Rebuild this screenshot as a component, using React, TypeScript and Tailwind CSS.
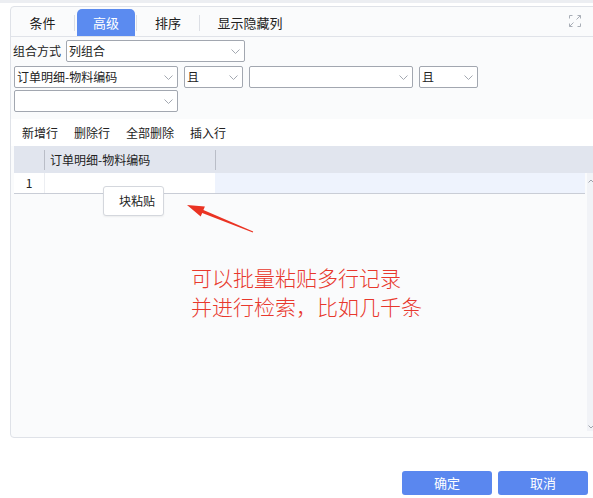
import React from "react";

function Chevron() {
  return (
    <svg width="9" height="5" viewBox="0 0 9 5" className="shrink-0">
      <polyline points="0.5,0.5 4.5,4.5 8.5,0.5" fill="none" stroke="#a3a8b1" strokeWidth="1" />
    </svg>
  );
}

function Select({ w, value }: { w: number; value?: string }) {
  return (
    <div
      className="h-[22px] border border-[#a2a7b0] rounded-[2px] bg-white flex items-center justify-between pl-[2px] pr-[4px] text-[12px] text-[#222] leading-none"
      style={{ width: w }}
    >
      <span>{value ?? ""}</span>
      <Chevron />
    </div>
  );
}

function ExpandIcon() {
  return (
    <svg width="12" height="12" viewBox="0 0 12 12" className="block">
      <g fill="none" stroke="#a9aeb7" strokeWidth="1">
        <polyline points="0.5,3.5 0.5,0.5 3.5,0.5" />
        <polyline points="11.5,8.5 11.5,11.5 8.5,11.5" />
        <line x1="7.5" y1="4.5" x2="11.5" y2="0.5" />
        <polyline points="8.5,0.5 11.5,0.5 11.5,3.5" />
        <line x1="0.5" y1="11.5" x2="4.5" y2="7.5" />
        <polyline points="0.5,8.5 0.5,11.5 3.5,11.5" />
      </g>
    </svg>
  );
}

export default function App() {
  return (
    <div className="relative w-[593px] h-[498px] overflow-hidden bg-white font-['Noto_Sans_CJK_SC',sans-serif] text-[#222]">
      <div className="h-[3px] bg-[#eceef2]" />
      <div className="mt-[3px] ml-[10px] w-[600px] h-[432px] border border-[#dfe2e8] rounded-[4px] bg-[#fafbfc] flex flex-col">
        {/* tabs */}
        <div className="h-[30px] pt-[2px] border-b border-[#e0e3e9] flex items-stretch relative">
          <div className="w-[63px] flex items-center justify-center text-[13px] text-[#222]">条件</div>
          <div className="w-px h-[16px] bg-[#dcdfe5] self-center" />
          <div className="ml-[2px] w-[58px] flex items-center justify-center text-[13px] text-white bg-[#5b8bf0] rounded-t-[5px]">高级</div>
          <div className="ml-[1px] w-px h-[16px] bg-[#dcdfe5] self-center" />
          <div className="w-[62px] flex items-center justify-center text-[13px]">排序</div>
          <div className="w-px h-[16px] bg-[#dcdfe5] self-center" />
          <div className="w-[100px] flex items-center justify-center text-[13px]">显示隐藏列</div>
          <div className="absolute left-[558px] top-[8px]">
            <ExpandIcon />
          </div>
        </div>

        {/* form */}
        <div className="mt-[3px] flex items-center h-[22px]">
          <span className="pl-[2px] w-[55px] text-[12px]">组合方式</span>
          <Select w={179} value="列组合" />
        </div>
        <div className="mt-[4px] flex items-center h-[22px] pl-[3px] gap-[6px]">
          <Select w={164} value="订单明细-物料编码" />
          <Select w={59} value="且" />
          <Select w={164} />
          <Select w={59} value="且" />
        </div>
        <div className="mt-[2px] flex items-center h-[22px] pl-[3px]">
          <Select w={164} />
        </div>

        {/* toolbar */}
        <div className="mt-[7px] h-[27px] bg-white flex items-center pl-[11px] gap-[16px] text-[12px]">
          <span>新增行</span>
          <span>删除行</span>
          <span>全部删除</span>
          <span>插入行</span>
        </div>

        {/* table */}
        <div className="ml-[3px] flex flex-col">
          <div className="h-[27px] bg-[#e1e5ee] flex items-center text-[12px]">
            <div className="w-[30px]" />
            <div className="w-px h-[20px] bg-[#b9bdc7]" />
            <div className="w-[170px] pl-[5px]">订单明细-物料编码</div>
            <div className="w-px h-[20px] bg-[#b9bdc7]" />
          </div>
          <div className="flex">
            <div className="w-[571px] h-[21px] flex border-b border-[#c9cdd6] text-[12px]">
              <div className="w-[30px] bg-white flex items-center justify-center">1</div>
              <div className="w-px bg-[#eceef2]" />
              <div className="w-[170px] bg-white" />
              <div className="flex-1 bg-[#eef3fd]" />
            </div>
            <div className="ml-[2px] w-[14px] h-[258px] bg-[#f1f3f7] relative">
              <svg width="6" height="4" viewBox="0 0 6 4" className="absolute left-[1px] top-[6px]">
                <polyline points="0.5,3.5 3,1 5.5,3.5" fill="none" stroke="#a0a4ad" strokeWidth="1" />
              </svg>
              <svg width="6" height="4" viewBox="0 0 6 4" className="absolute left-[1px] bottom-[2px]">
                <polyline points="0.5,0.5 3,3 5.5,0.5" fill="none" stroke="#a0a4ad" strokeWidth="1" />
              </svg>
            </div>
          </div>
        </div>
      </div>

      {/* buttons */}
      <div className="mt-[33px] flex justify-end gap-[6px] pr-[5px]">
        <button className="w-[90px] h-[24px] rounded-[3px] bg-[#5a87ef] text-white text-[13px] flex items-center justify-center">确定</button>
        <button className="w-[90px] h-[24px] rounded-[3px] bg-[#5a87ef] text-white text-[13px] flex items-center justify-center">取消</button>
      </div>

      {/* context menu */}
      <div className="absolute left-[103px] top-[186px] w-[61px] h-[30px] bg-white border border-[#d4d7dd] rounded-[3px] flex items-center pl-[15px] text-[12px] shadow-[0_1px_2px_rgba(0,0,0,0.06)]">
        块粘贴
      </div>

      {/* annotation arrow */}
      <svg width="593" height="498" viewBox="0 0 593 498" className="absolute left-0 top-0 pointer-events-none">
        <polygon
          points="187,205 204.9,206.4 203.4,210.1 253.2,231.6 252.8,232.4 202.2,212.9 200.7,216.6"
          fill="#ea3323"
        />
      </svg>

      {/* annotation text */}
      <div className="absolute left-[191px] top-[263px] text-[21px] leading-[29px] font-light text-[#e8382d]">
        <div>可以批量粘贴多行记录</div>
        <div>并进行检索，比如几千条</div>
      </div>
    </div>
  );
}
